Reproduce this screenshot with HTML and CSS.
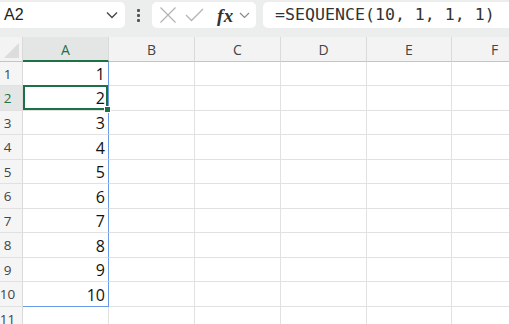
FILE: index.html
```html
<!DOCTYPE html>
<html>
<head>
<meta charset="utf-8">
<link rel="stylesheet" href="styles.css">
</head>
<body>
<div class="toolbar">
  <div class="namebox">
    <span class="name">A2</span>
    <svg class="chev" width="12" height="8" viewBox="0 0 12 8"><path d="M1 1.5 L6 6.5 L11 1.5" fill="none" stroke="#444" stroke-width="1.3"/></svg>
  </div>
  <div class="dots"><span></span><span></span><span></span></div>
  <div class="fxbox">
    <svg width="18" height="18" viewBox="0 0 18 18"><path d="M1.5 1.5 L16.5 16.5 M16.5 1.5 L1.5 16.5" stroke="#b4b4b4" stroke-width="1.3" fill="none"/></svg>
    <svg width="19" height="14" viewBox="0 0 19 14"><path d="M1 7 L6.5 12.5 L18 1" stroke="#b4b4b4" stroke-width="1.3" fill="none"/></svg>
    <span class="fx">fx</span>
    <svg width="11" height="7" viewBox="0 0 11 7"><path d="M1 1 L5.5 5.5 L10 1" fill="none" stroke="#8a8a8a" stroke-width="1.2"/></svg>
  </div>
  <div class="formula">=SEQUENCE(10, 1, 1, 1)</div>
</div>
<div class="sheet">
  <div class="corner"><span class="tri"></span></div>
  <div class="colh sel">A</div>
  <div class="colh">B</div>
  <div class="colh">C</div>
  <div class="colh">D</div>
  <div class="colh">E</div>
  <div class="colh">F</div>

  <div class="rowh">1</div><div class="cell a first">1</div><div class="cell"></div><div class="cell"></div><div class="cell"></div><div class="cell"></div><div class="cell"></div>
  <div class="rowh sel">2</div><div class="cell a active">2</div><div class="cell"></div><div class="cell"></div><div class="cell"></div><div class="cell"></div><div class="cell"></div>
  <div class="rowh">3</div><div class="cell a">3</div><div class="cell"></div><div class="cell"></div><div class="cell"></div><div class="cell"></div><div class="cell"></div>
  <div class="rowh">4</div><div class="cell a">4</div><div class="cell"></div><div class="cell"></div><div class="cell"></div><div class="cell"></div><div class="cell"></div>
  <div class="rowh">5</div><div class="cell a">5</div><div class="cell"></div><div class="cell"></div><div class="cell"></div><div class="cell"></div><div class="cell"></div>
  <div class="rowh">6</div><div class="cell a">6</div><div class="cell"></div><div class="cell"></div><div class="cell"></div><div class="cell"></div><div class="cell"></div>
  <div class="rowh">7</div><div class="cell a">7</div><div class="cell"></div><div class="cell"></div><div class="cell"></div><div class="cell"></div><div class="cell"></div>
  <div class="rowh">8</div><div class="cell a">8</div><div class="cell"></div><div class="cell"></div><div class="cell"></div><div class="cell"></div><div class="cell"></div>
  <div class="rowh">9</div><div class="cell a">9</div><div class="cell"></div><div class="cell"></div><div class="cell"></div><div class="cell"></div><div class="cell"></div>
  <div class="rowh">10</div><div class="cell a last">10</div><div class="cell"></div><div class="cell"></div><div class="cell"></div><div class="cell"></div><div class="cell"></div>
  <div class="rowh">11</div><div class="cell"></div><div class="cell"></div><div class="cell"></div><div class="cell"></div><div class="cell"></div><div class="cell"></div>
</div>
</body>
</html>
```
FILE: styles.css
```css
html, body {
  margin: 0;
  padding: 0;
  background: #ffffff;
  overflow: hidden;
}
body {
  width: 509px;
  height: 324px;
  font-family: "Open Sans", "Noto Sans", "Liberation Sans", sans-serif;
  color: #1f1f1f;
}
.toolbar {
  display: flex;
  align-items: flex-start;
  height: 37px;
  padding-top: 2px;
  box-sizing: border-box;
  background: #eceeee;
}
.namebox {
  width: 125px;
  height: 26px;
  box-sizing: border-box;
  background: #fff;
  border-radius: 0 5px 5px 0;
  display: flex;
  align-items: center;
  justify-content: space-between;
  padding: 0 7px 0 4px;
}
.name {
  font-family: "Liberation Sans", Arial, sans-serif;
  font-size: 16px;
  color: #222;
}
.dots {
  width: 27px;
  height: 26px;
  display: flex;
  flex-direction: column;
  align-items: center;
  justify-content: center;
  gap: 2px;
}
.dots span {
  width: 3px;
  height: 3px;
  background: #555;
  border-radius: 1px;
}
.fxbox {
  width: 104px;
  height: 26px;
  box-sizing: border-box;
  background: #fff;
  border-radius: 5px;
  display: flex;
  align-items: center;
  padding-left: 7px;
}
.fxbox svg:nth-child(1) { margin-right: 8px; }
.fxbox svg:nth-child(2) { margin-right: 13px; }
.fx {
  font-family: "Liberation Serif", "DejaVu Serif", serif;
  font-style: italic;
  font-weight: bold;
  font-size: 19px;
  color: #333;
  letter-spacing: 0.5px;
  margin-right: 5px;
  line-height: 1;
}
.formula {
  margin-left: 7px;
  flex: 1;
  height: 26px;
  box-sizing: border-box;
  background: #fff;
  border-radius: 5px 0 0 5px;
  font-family: "DejaVu Sans Mono", "Liberation Mono", monospace;
  font-size: 16.6px;
  color: #333;
  line-height: 26px;
  padding-left: 12px;
  white-space: nowrap;
}
.sheet {
  display: grid;
  grid-template-columns: 23px 86px 86px 86px 86px 85px 86px;
  grid-template-rows: 25px 24px 25px 24px 25px 24px 25px 24px 25px 24px 25px 24px;
  background: #fff;
}
.sheet > div {
  box-sizing: border-box;
}
.corner {
  background: #f3f3f3;
  border-right: 1px solid #dadada;
  border-bottom: 1px solid #c4c4c4;
  position: relative;
}
.tri {
  position: absolute;
  right: 3px;
  bottom: 3px;
  width: 0;
  height: 0;
  border-left: 15px solid transparent;
  border-bottom: 15px solid #dcdcdc;
}
.colh {
  background: #f3f3f3;
  border-right: 1px solid #dadada;
  border-bottom: 1px solid #c4c4c4;
  font-size: 14px;
  color: #444;
  display: flex;
  align-items: center;
  justify-content: center;
  padding-top: 1px;
}
.colh.sel {
  background: #e4e6e5;
  color: #1e7145;
  border-bottom: 2px solid #1e7145;
  padding-top: 2px;
}
.rowh {
  background: #f5f5f5;
  border-right: 1px solid #dadada;
  border-bottom: 1px solid #e1e1e1;
  font-size: 13.5px;
  color: #444;
  display: flex;
  align-items: center;
  justify-content: center;
  padding-right: 7px;
}
.rowh.sel {
  background: #e4e6e5;
  color: #1e7145;
}
.cell {
  border-right: 1px solid #e1e1e1;
  border-bottom: 1px solid #e1e1e1;
  font-size: 16px;
  color: #111;
  display: flex;
  align-items: center;
  justify-content: flex-end;
  padding-right: 3px;
  padding-top: 1px;
}
.cell.a {
  border-right: 1px solid #6a9be6;
}
.cell.last {
  border-bottom: 1px solid #6a9be6;
}
.cell.active {
  position: relative;
  box-shadow: inset 0 0 0 2px #1e7145;
  margin-top: -1px;
  height: calc(100% + 1px);
}
.cell.active::after {
  content: "";
  position: absolute;
  right: -3px;
  bottom: -3px;
  width: 5px;
  height: 5px;
  background: #1e7145;
  border: 1px solid #fff;
}
```
